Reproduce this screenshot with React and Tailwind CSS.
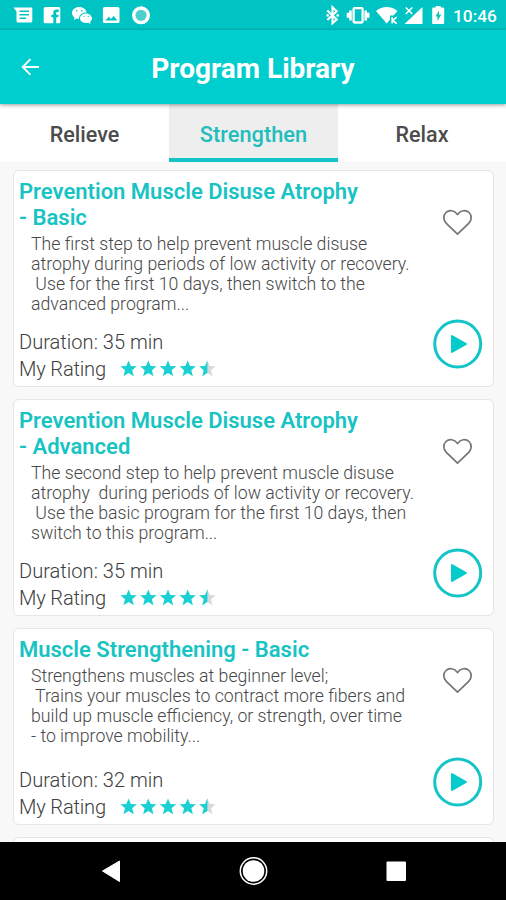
const programs = [
  {
    title: 'Prevention Muscle Disuse Atrophy\n- Basic',
    description: 'The first step to help prevent muscle disuse\natrophy during periods of low activity or recovery.\n Use for the first 10 days, then switch to the\nadvanced program...',
    duration: 35,
    height: 'h-[217px]',
  },
  {
    title: 'Prevention Muscle Disuse Atrophy\n- Advanced',
    description: 'The second step to help prevent muscle disuse\natrophy  during periods of low activity or recovery.\n Use the basic program for the first 10 days, then\nswitch to this program...',
    duration: 35,
    height: 'h-[217px]',
  },
  {
    title: 'Muscle Strengthening - Basic',
    description: 'Strengthens muscles at beginner level;\n Trains your muscles to contract more fibers and\nbuild up muscle efficiency, or strength, over time\n- to improve mobility...',
    duration: 32,
    height: 'h-[197px]',
  },
]

const STAR = 'M10 0.500 L12.700 7 L19.500 7.300 L14.200 11.800 L16 19 L10 15 L4 19 L5.800 11.800 L0.500 7.300 L7.300 7 Z'

function StatusBar() {
  return (
    <div className="flex h-[30px] shrink-0 items-start justify-between bg-[#00c3c3] text-white">
      <svg className="h-[30px] w-[160px]" viewBox="0 0 160 30" fill="currentColor">
        <path fillRule="evenodd" d="M13.500 7.500H31a1.300 1.300 0 0 1 1.300 1.300V21a1.500 1.500 0 0 1-1.500 1.500H18A1.500 1.500 0 0 1 16.500 21V11.500ZM19.500 10.500v1.600h9.500v-1.600ZM19.500 14v1.600h9.500V14ZM19.500 17.500v1.600h6.500v-1.600Z" />
        <path fillRule="evenodd" d="M45.200 7h13.600A1.500 1.500 0 0 1 60.300 8.500v13.200a1.500 1.500 0 0 1-1.500 1.500H56.200v-6h2.100l.4-2.400h-2.500v-1.500c0-.9.400-1.300 1.300-1.300h1.300V9.600h-2.200c-2.200 0-3.300 1.200-3.300 3.200v2h-2v2.400h2v6h-8.100a1.500 1.500 0 0 1-1.500-1.500V8.500A1.500 1.500 0 0 1 45.200 7Z" />
        <path fillRule="evenodd" d="M79.300 7c4 0 7 2.500 7.300 5.600-4.300-.2-7.700 2.400-7.500 6.200-1 0-1.800-.1-2.700-.4L73.800 20l.7-2.600C73 16.300 72 14.800 72 13c0-3.400 3.300-6 7.300-6ZM76.800 10a.8.8 0 1 0 0 1.600.8.8 0 0 0 0-1.600Zm5 0a.8.8 0 1 0 0 1.600.8.8 0 0 0 0-1.600Z" />
        <path fillRule="evenodd" d="M86 13.500c3.300 0 6 2.200 6 4.900 0 1.400-.8 2.600-2 3.500l.5 2-2.300-1.200c-.7.200-1.400.3-2.200.3-3.400 0-6-2-6-4.700s2.700-4.800 6-4.800ZM84 16a.6.6 0 1 0 0 1.200.6.6 0 0 0 0-1.200Zm4.200 0a.6.6 0 1 0 0 1.200.6.6 0 0 0 0-1.200Z" />
        <path fillRule="evenodd" d="M104.500 7h13.400a1.600 1.600 0 0 1 1.600 1.600v12.800a1.600 1.600 0 0 1-1.600 1.600h-13.400a1.600 1.600 0 0 1-1.600-1.600V8.600A1.600 1.600 0 0 1 104.500 7ZM105.300 20.500h12l-3.600-4.500-2.800 3-2-2.200Z" />
        <circle cx="141" cy="15.300" r="9" />
        <circle cx="141" cy="15.300" r="5.600" fill="#4fd0cf" />
      </svg>
      <div className="flex pr-[9px]">
        <svg className="h-[30px] w-[130px]" viewBox="320 0 130 30" fill="currentColor">
          <path d="M327.300 10.500 336.700 19.500 332.500 23.200V7.200L336.700 11.200 327.300 20" fill="none" stroke="currentColor" strokeWidth="2.100" />
          <circle cx="327.700" cy="15.400" r="1.300" />
          <circle cx="337.700" cy="15.400" r="1.300" />
          <rect x="353.600" y="8.200" width="9" height="14.300" rx="1" fill="none" stroke="currentColor" strokeWidth="2.300" />
          <path d="M350.500 10.500v10M348 12.800v5M365.700 10.500v10M368.200 12.800v5" stroke="currentColor" strokeWidth="2.600" />
          <path d="M376 11c6-5.200 15.500-5.200 21.500 0l-4 4.500h-3.500v4L386.700 23.500Z" />
          <path d="M392.200 17.200v6.300M396.700 17.200l-4 3.200 4 3.200" fill="none" stroke="currentColor" strokeWidth="1.700" />
          <path d="M422.500 7v17h-18Z" />
          <path d="m405.500 7.500 7.500 7.500m0-7.500-7.500 7.500" stroke="#00c3c3" strokeWidth="3" />
          <path d="m405.800 7.500 6.500 6.500m0-6.500-6.500 6.500" stroke="currentColor" strokeWidth="1.600" />
          <path fillRule="evenodd" d="M435.700 7.500V6h5v1.500h2.300a1.200 1.200 0 0 1 1.200 1.200v14.200a1.200 1.200 0 0 1-1.200 1.200h-9.600a1.200 1.200 0 0 1-1.200-1.200V8.700a1.200 1.200 0 0 1 1.200-1.200ZM439 10.500l-3.500 6h2v4.500l3.700-6.200H439Z" />
        </svg>
        <span className="mt-[6px] ml-[3px] w-[44px] text-[17.300px] leading-5 font-medium">10:46</span>
      </div>
    </div>
  )
}

function Header() {
  return (
    <header className="z-10 grid h-[74px] shrink-0 grid-cols-[60px_1fr_60px] items-center bg-[#00cece] text-white shadow-[0_1px_4px_rgba(0,0,0,0.4)]">
      <svg className="ml-[21px] h-5 w-5" viewBox="0 0 20 20" fill="none" stroke="currentColor" strokeWidth="1.900">
        <path d="M18 10H2M9.500 2.200 1.700 10l7.800 7.800" />
      </svg>
      <h1 className="pt-[3px] text-center text-[28px] leading-8 font-bold">Program Library</h1>
    </header>
  )
}

function Tabs() {
  return (
    <nav className="grid h-[58px] shrink-0 grid-cols-[169px_169px_168px] bg-white text-center text-[21.500px] leading-[61px] font-medium text-[#4c4c4c]">
      <span>Relieve</span>
      <span className="h-[58px] border-b-4 border-[#13c3c5] bg-[#eeeeee] text-[21.800px] text-[#22bdbd]">Strengthen</span>
      <span>Relax</span>
    </nav>
  )
}

function Rating() {
  return (
    <svg className="ml-[14px] h-[18px] w-[98px]" viewBox="0 0 98 18">
      {[0, 1, 2, 3].map((i) => (
        <path key={i} d={STAR} fill="#1bd0d3" transform={`translate(${i * 19.700} 0) scale(0.86)`} />
      ))}
      <g transform="translate(78.800 0) scale(0.86)">
        <path d={STAR} fill="#d9d9d9" />
        <path d="M10 0.500V15L4 19 5.800 11.800 0.500 7.300 7.300 7Z" fill="#1bd0d3" />
      </g>
    </svg>
  )
}

function ProgramCard({ program }) {
  return (
    <article className={`flex shrink-0 justify-between rounded-md border border-[#e6e6e6] bg-white pt-[8px] pb-[4px] pl-[5px] pr-[10px] ${program.height}`}>
      <div className="flex flex-col whitespace-pre">
        <h2 className="text-[22px] leading-[26px] font-semibold text-[#18c3c3]">{program.title}</h2>
        <p className="mt-[3px] pl-3 text-[17.700px] leading-[20.150px] font-light text-[#484848]">{program.description}</p>
        <div className="mt-auto text-[20.100px] leading-[26.300px] font-light text-[#404040]">
          <p>Duration: {program.duration} min</p>
          <div className="flex items-center">
            <span className="tracking-[-0.180px]">My Rating</span>
            <Rating />
          </div>
        </div>
      </div>
      <div className="flex flex-col items-center justify-between pt-[29px] pb-[13px]">
        <svg className="h-[28px] w-[32px]" viewBox="0 0 32 28" fill="none" stroke="#757575" strokeWidth="1.700">
          <path d="M15.500 26.200 4.300 15.300C.9 11.900 1.200 7.200 4 4.500c3.200-3 8.300-2.300 11.500 2 3.200-4.300 8.300-5 11.500-2 2.800 2.700 3.100 7.400-.3 10.800Z" strokeLinejoin="round" />
        </svg>
        <svg className="h-[50px] w-[50px]" viewBox="0 0 50 50">
          <circle cx="24.700" cy="25" r="23" fill="none" stroke="#14c4c7" strokeWidth="3" />
          <path d="M19 17v16L33 25Z" fill="#05cbcb" stroke="#05cbcb" strokeWidth="2" strokeLinejoin="round" />
        </svg>
      </div>
    </article>
  )
}

function NavigationBar() {
  return (
    <div className="flex h-[58px] shrink-0 justify-center bg-black">
      <svg className="h-[58px] w-[506px]" viewBox="0 0 506 58" fill="white">
        <path d="M102.500 29 119.500 19v20.500Z" stroke="white" strokeWidth="1" strokeLinejoin="round" />
        <circle cx="253.500" cy="29" r="10.800" />
        <circle cx="253.500" cy="29" r="13.200" fill="none" stroke="white" strokeWidth="1.500" />
        <rect x="386.500" y="19.500" width="19.500" height="19.500" rx="1" />
      </svg>
    </div>
  )
}

export default function App() {
  return (
    <div className="flex h-screen w-full flex-col overflow-hidden bg-[#f8f8f8] font-['Roboto',sans-serif]">
      <StatusBar />
      <Header />
      <Tabs />
      <main className="flex min-h-0 flex-1 flex-col gap-3 overflow-hidden pt-[8px] pr-[12px] pl-[13px]">
        {programs.map((program) => (
          <ProgramCard key={program.title} program={program} />
        ))}
        <div className="h-[100px] shrink-0 rounded-md border border-[#e6e6e6] bg-white" />
      </main>
      <NavigationBar />
    </div>
  )
}
